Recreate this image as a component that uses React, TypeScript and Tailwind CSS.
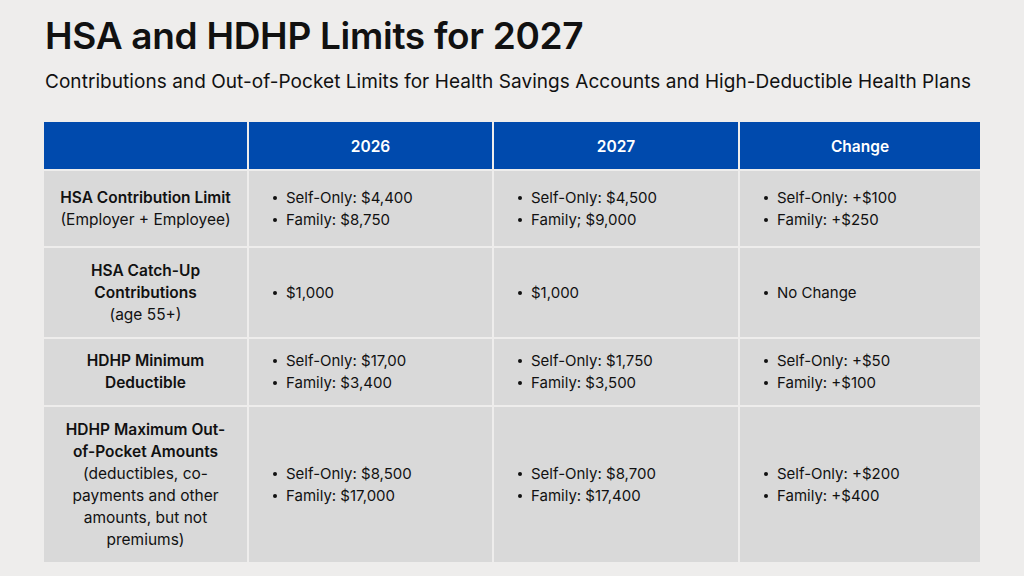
import React from 'react'

type Row = {
  title: string[]
  note: string[]
  height: string
  values: string[][]
}

const rows: Row[] = [
  {
    title: ['HSA Contribution Limit'],
    note: ['(Employer + Employee)'],
    height: 'h-[75px]',
    values: [
      ['Self-Only: $4,400', 'Family: $8,750'],
      ['Self-Only: $4,500', 'Family; $9,000'],
      ['Self-Only: +$100', 'Family: +$250'],
    ],
  },
  {
    title: ['HSA Catch-Up', 'Contributions'],
    note: ['(age 55+)'],
    height: 'h-[89px]',
    values: [['$1,000'], ['$1,000'], ['No Change']],
  },
  {
    title: ['HDHP Minimum', 'Deductible'],
    note: [],
    height: 'h-[66px]',
    values: [
      ['Self-Only: $17,00', 'Family: $3,400'],
      ['Self-Only: $1,750', 'Family: $3,500'],
      ['Self-Only: +$50', 'Family: +$100'],
    ],
  },
  {
    title: ['HDHP Maximum Out-', 'of-Pocket Amounts'],
    note: ['(deductibles, co-', 'payments and other', 'amounts, but not', 'premiums)'],
    height: 'h-[155px]',
    values: [
      ['Self-Only: $8,500', 'Family: $17,000'],
      ['Self-Only: $8,700', 'Family: $17,400'],
      ['Self-Only: +$200', 'Family: +$400'],
    ],
  },
]

const BulletList = ({ items }: { items: string[] }) => (
  <ul className="flex flex-col text-[15px]">
    {items.map((item) => (
      <li key={item} className="flex items-center gap-[9px] leading-[22px]">
        <span className="w-[4px] h-[4px] rounded-full bg-[#111]" />
        <span>{item}</span>
      </li>
    ))}
  </ul>
)

export default function App() {
  return (
    <div className="w-[1024px] h-[576px] bg-[#eeedec] text-[#111] font-['Inter',sans-serif] pl-[44px] pt-[14px]">
      <h1 className="text-[37px] font-semibold tracking-[-0.3px] leading-[44px] pl-[1px]">
        HSA and HDHP Limits for 2027
      </h1>
      <p className="text-[19px] tracking-[0.05px] leading-[26px] mt-[11px] pl-[1px]">
        Contributions and Out-of-Pocket Limits for Health Savings Accounts and High-Deductible Health Plans
      </p>

      <div className="mt-[27px] grid grid-cols-[203px_243px_244px_240px] gap-[2px] text-[15.5px]">
        <div className="h-[47px] bg-[#004aad]" />
        {['2026', '2027', 'Change'].map((h) => (
          <div key={h} className="h-[47px] bg-[#004aad] text-white font-semibold flex items-center justify-center pt-[2px]">
            {h}
          </div>
        ))}

        {rows.map((row) => (
          <React.Fragment key={row.title.join(' ')}>
            <div className={`${row.height} bg-[#d9d9d9] flex flex-col items-center justify-center text-center leading-[22px]`}>
              {row.title.map((t) => (
                <span key={t} className="font-semibold">{t}</span>
              ))}
              {row.note.map((n) => (
                <span key={n}>{n}</span>
              ))}
            </div>
            {row.values.map((v, i) => (
              <div key={i} className={`${row.height} bg-[#d9d9d9] flex items-center pl-[24px]`}>
                <BulletList items={v} />
              </div>
            ))}
          </React.Fragment>
        ))}
      </div>
    </div>
  )
}
